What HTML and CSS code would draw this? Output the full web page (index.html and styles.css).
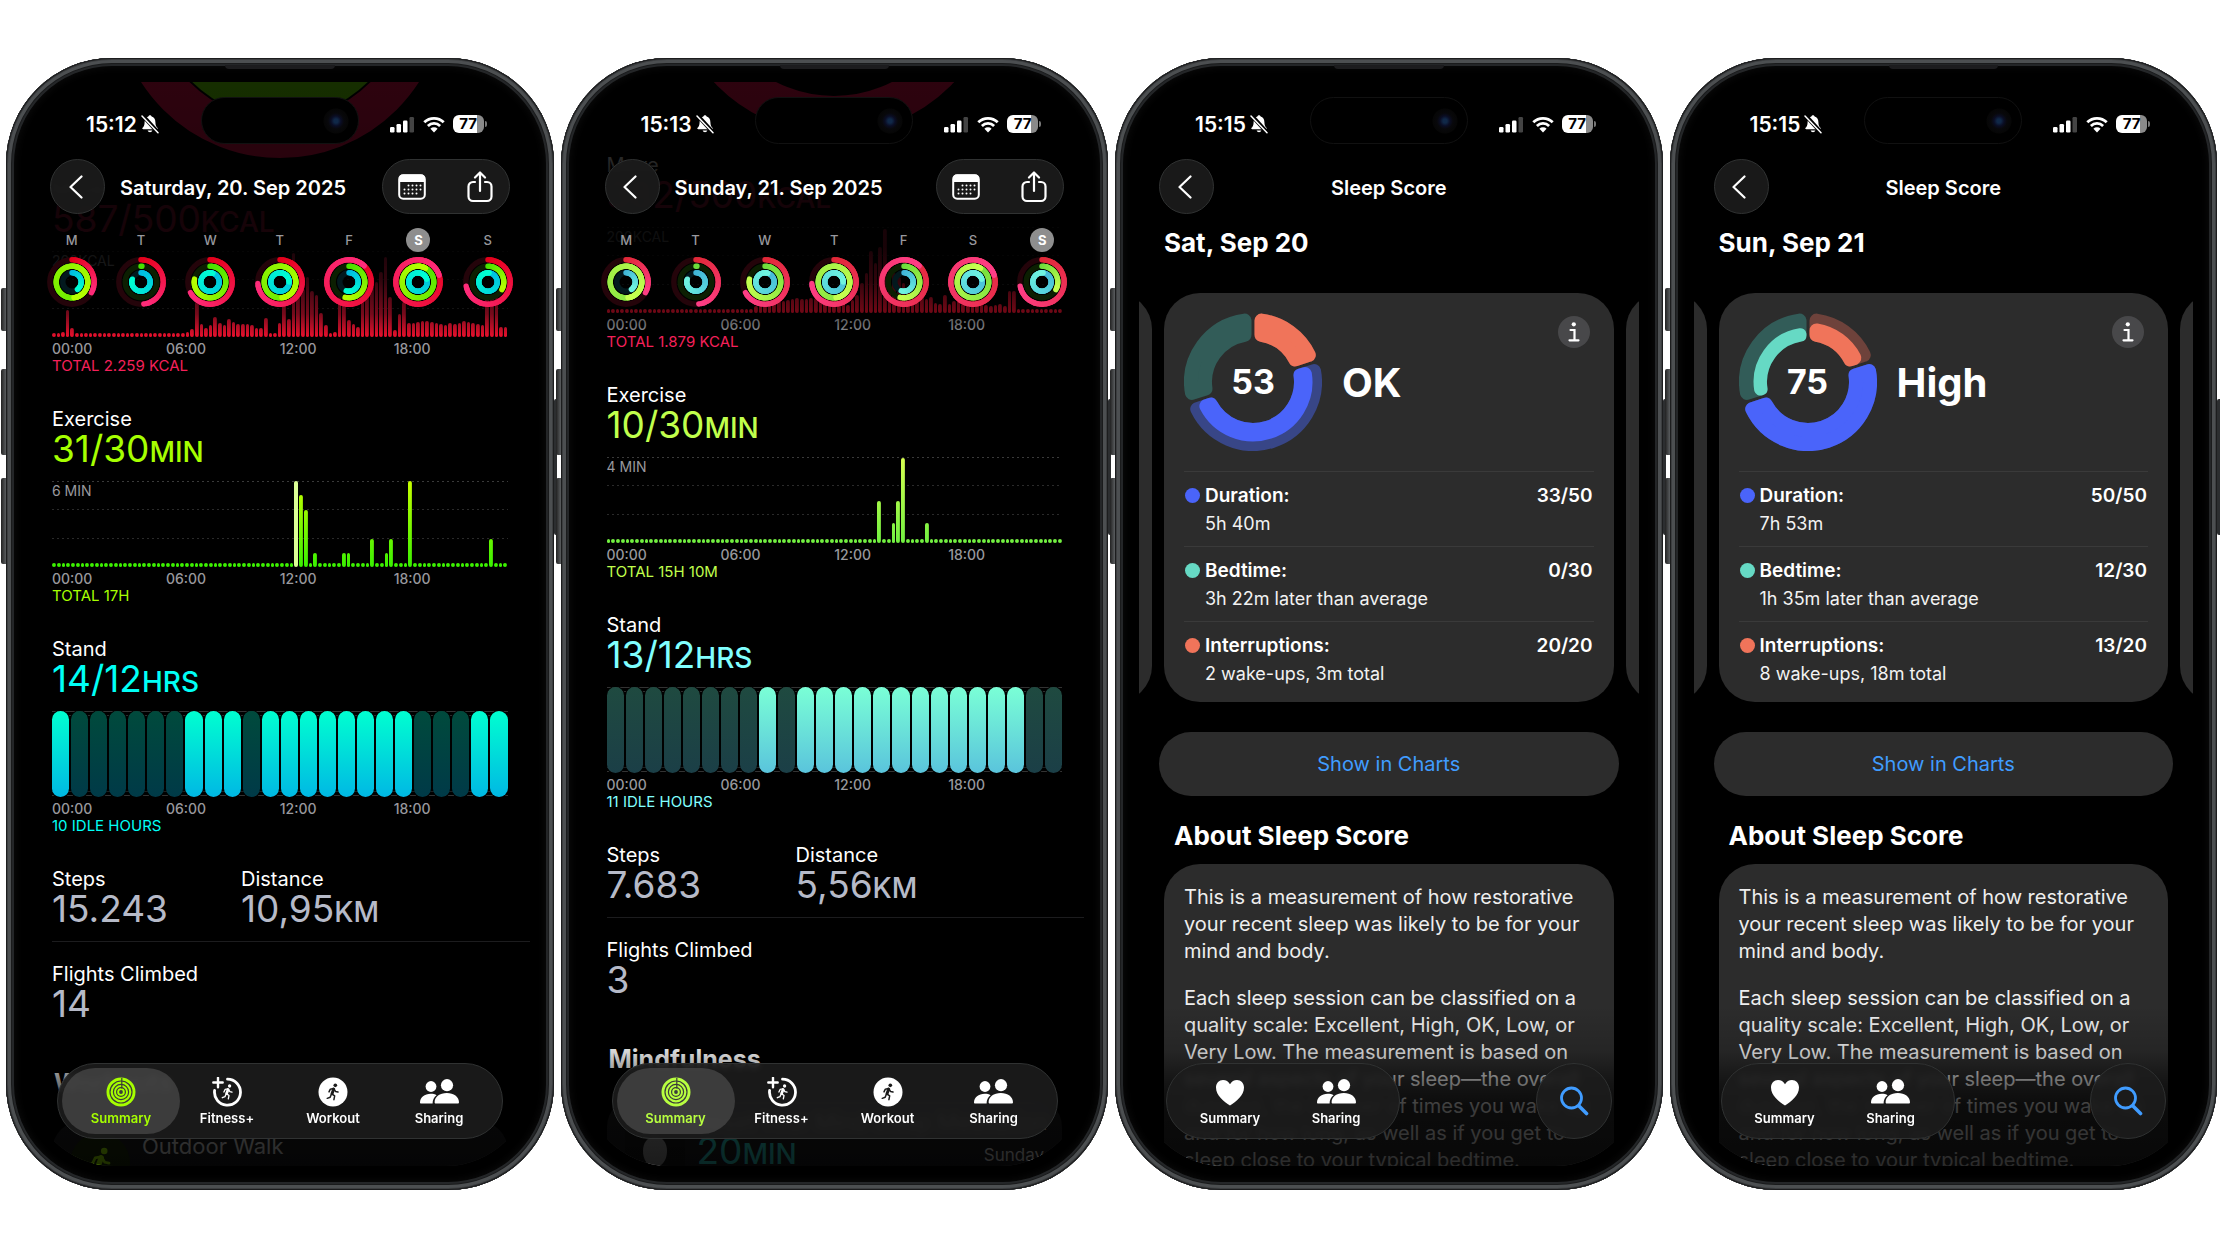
FILE: index.html
```html
<!DOCTYPE html>
<html lang="en">
<head>
  <meta charset="UTF-8" />
  <meta name="viewport" content="width=device-width,initial-scale=1" />
  <title>Activity and Sleep Score</title>
  <link rel="stylesheet" href="styles.css">
</head>
<body>

  <!-- ICONS -->
  <svg class="icon-defs" aria-hidden="true">
    <symbol id="i-bell" viewBox="0 0 18 20">
      <path d="M9 1.2c-.9 0-1.5.6-1.6 1.4C4.900 3.300 3.600 5.500 3.600 8.200c0 3.300-.9 4.400-2 5.500-.6.6-.3 1.500.6 1.500h13.600c.9 0 1.200-.9.6-1.500-1.100-1.100-2-2.200-2-5.500 0-2.700-1.300-4.900-3.800-5.600C10.500 1.800 9.900 1.200 9 1.200z" fill="#fff"/>
      <path d="M6.600 16.500a2.500 2.500 0 0 0 4.800 0z" fill="#fff"/>
      <path d="M1.500 1.300l15.500 17" stroke="#000" stroke-width="4"/>
      <path d="M1 2l16 16.800" stroke="#fff" stroke-width="1.500" stroke-linecap="round"/>
    </symbol>
    <symbol id="i-signal" viewBox="0 0 25 17">
      <rect x="0" y="11" width="4.500" height="5.500" rx="1.200" fill="#fff"/>
      <rect x="6.500" y="8" width="4.500" height="8.500" rx="1.200" fill="#fff"/>
      <rect x="13" y="4.500" width="4.500" height="12" rx="1.200" fill="#fff"/>
      <rect x="19.500" y="1" width="4.500" height="15.500" rx="1.200" fill="#444"/>
    </symbol>
    <symbol id="i-wifi" viewBox="0 0 22 17">
      <g fill="none" stroke="#fff" stroke-width="2.800">
        <path d="M1.300 6.300a13.800 13.800 0 0 1 19.400 0"/>
        <path d="M4.900 9.900a8.700 8.700 0 0 1 12.200 0"/>
      </g>
      <path d="M11 16.500l-3.600-3.700a5.100 5.100 0 0 1 7.200 0z" fill="#fff"/>
    </symbol>
    <symbol id="i-back" viewBox="0 0 14 24">
      <path d="M12.500 1.500L1.500 12l11 10.500" fill="none" stroke="#fff" stroke-width="2.200" stroke-linecap="round" stroke-linejoin="round"/>
    </symbol>
    <symbol id="i-calendar" viewBox="0 0 28 26">
      <rect x="1.200" y="1.200" width="25.600" height="23.600" rx="4" fill="none" stroke="#fff" stroke-width="2"/>
      <path d="M1 8V4.500a4 4 0 0 1 4-4h18a4 4 0 0 1 4 4V8z" fill="#fff"/>
      <g stroke="#fff" stroke-width="2" stroke-linecap="round" stroke-dasharray="0 4">
        <path d="M10.500 11.500h12.500"/><path d="M6.500 15.500h16.500"/><path d="M6.500 19.500h12.500"/>
      </g>
    </symbol>
    <symbol id="i-share" viewBox="0 0 26 32">
      <g fill="none" stroke="#fff" stroke-width="2.200" stroke-linecap="round" stroke-linejoin="round">
        <path d="M8 11H6a4.500 4.500 0 0 0-4.500 4.500v10A4.500 4.500 0 0 0 6 30h14a4.500 4.500 0 0 0 4.500-4.500v-10A4.500 4.500 0 0 0 20 11h-2"/>
        <path d="M13 20V1.800M8 6.500l5-5 5 5"/>
      </g>
    </symbol>
    <symbol id="i-rings" viewBox="0 0 30 30">
      <circle cx="15" cy="15" r="14.500" fill="currentColor"/>
      <g fill="none" stroke="#3a3a3a" stroke-width="1.200">
        <circle cx="15" cy="15" r="11"/><circle cx="15" cy="15" r="7.600"/><circle cx="15" cy="15" r="4.400"/>
        <path d="M15.800 1v10.500"/>
      </g>
      <circle cx="15" cy="15" r="1.900" fill="#3a3a3a"/>
    </symbol>
    <symbol id="i-runner" viewBox="0 0 24 24">
      <circle cx="14.800" cy="4" r="2.200" fill="currentColor"/>
      <g fill="none" stroke="currentColor" stroke-linecap="round" stroke-linejoin="round">
        <path d="M12.800 8.600l-2 5.400" stroke-width="3.600"/>
        <path d="M12.500 7.800l-3.700.8-1.600 3.300M13.300 8.500l1.900 3 2.800.6M11 14.500l3 2.200-.9 4.500M10.200 14.500L8.600 18.300l-3.500 1.300" stroke-width="1.800"/>
      </g>
    </symbol>
    <symbol id="i-fitness" viewBox="0 0 30 30">
      <path d="M15.500 2.200A13 13 0 1 1 2.600 13.500" fill="none" stroke="currentColor" stroke-width="2.800" stroke-linecap="round"/>
      <path d="M6 .8v9.400M1.300 5.500h9.400" stroke="currentColor" stroke-width="2.400" stroke-linecap="round"/>
      <use href="#i-runner" x="6.500" y="6" width="18" height="18"/>
    </symbol>
    <symbol id="i-workout" viewBox="0 0 30 30">
      <circle cx="15" cy="15" r="14.500" fill="currentColor"/>
      <g color="#1b1b1b"><use href="#i-runner" x="5" y="5" width="20" height="20"/></g>
    </symbol>
    <symbol id="i-people" viewBox="0 0 39 30">
      <circle cx="11" cy="9.500" r="5.400" fill="currentColor"/>
      <circle cx="27" cy="8.200" r="6.100" fill="currentColor"/>
      <path d="M0 25.500C0 20.500 4.500 16.800 10.800 16.800c2.200 0 4.200.5 5.800 1.400-2.600 1.900-4 4.500-4 8.300H1.200C.4 26.500 0 26.200 0 25.500z" fill="currentColor"/>
      <path d="M14.600 25.300c0-5.400 5.200-9.300 12.200-9.300s12.200 3.900 12.200 9.300c0 .8-.5 1.200-1.300 1.200H15.900c-.8 0-1.300-.4-1.300-1.200z" fill="currentColor"/>
    </symbol>
    <symbol id="i-heart" viewBox="0 0 30 30">
      <path d="M15 28.500C9 24.500 1 18.500 1 10.500 1 6 4.200 3 8 3c3 0 5.500 1.500 7 4.300C16.500 4.500 19 3 22 3c3.800 0 7 3 7 7.500 0 8-8 14-14 18z" fill="currentColor"/>
    </symbol>
    <symbol id="i-search" viewBox="0 0 30 30">
      <circle cx="12.500" cy="12" r="10" fill="none" stroke="currentColor" stroke-width="2.800"/>
      <path d="M20 20l7.500 7.500" stroke="currentColor" stroke-width="3.600" stroke-linecap="round"/>
    </symbol>
    <symbol id="i-info" viewBox="0 0 12 20">
      <circle cx="5.800" cy="2.300" r="2.100" fill="#fff"/>
      <path d="M2.500 8h4v10M1.500 18.300h9" fill="none" stroke="#fff" stroke-width="2.200" stroke-linecap="round"/>
    </symbol>
  </svg>

  <main class="phones">

    <!-- ACTIVITY, SATURDAY -->
    <section class="phone">
      <i class="side-button action"></i><i class="side-button up"></i><i class="side-button down"></i><i class="side-button power"></i>
      <div class="screen">
        <header class="top-bar faded">
          <div class="status">
            <span class="time">15:12</span>
            <svg class="bell"><use href="#i-bell"/></svg>
            <svg class="signal"><use href="#i-signal"/></svg>
            <svg class="wifi"><use href="#i-wifi"/></svg>
            <span class="battery">77</span>
          </div>
          <div class="nav">
            <button class="glass back" aria-label="Back"><svg><use href="#i-back"/></svg></button>
            <h1 class="nav-title">Saturday, 20. Sep 2025</h1>
            <div class="glass actions">
              <button aria-label="Calendar"><svg class="calendar"><use href="#i-calendar"/></svg></button>
              <button aria-label="Share"><svg class="share"><use href="#i-share"/></svg></button>
            </div>
          </div>
          <div class="week" data-selected="5" data-theme="vivid"></div>
        </header>
        <div class="island"></div>

        <div class="scroll day-one">
          <svg class="big-ring" viewBox="0 0 332 332" aria-hidden="true">
            <circle cx="166" cy="166" r="146" fill="none" stroke="#fa1150" stroke-width="38"/>
            <circle cx="166" cy="166" r="106" fill="none" stroke="#78ff00" stroke-width="38"/>
          </svg>
          <article class="metric move">
            <h2>Move</h2>
            <p class="value">587/500<small>KCAL</small></p>
            <div class="chart bars" data-chart="move1"><span class="scale">200KCAL</span></div>
            <div class="axis"><span>00:00</span><span>06:00</span><span>12:00</span><span>18:00</span></div>
            <p class="total">TOTAL 2.259 KCAL</p>
          </article>
          <article class="metric exercise">
            <h2>Exercise</h2>
            <p class="value">31/30<small>MIN</small></p>
            <div class="chart bars" data-chart="exercise1"><span class="scale">6 MIN</span></div>
            <div class="axis"><span>00:00</span><span>06:00</span><span>12:00</span><span>18:00</span></div>
            <p class="total">TOTAL 17H</p>
          </article>
          <article class="metric stand">
            <h2>Stand</h2>
            <p class="value">14/12<small>HRS</small></p>
            <div class="chart hours" data-chart="stand1"></div>
            <div class="axis"><span>00:00</span><span>06:00</span><span>12:00</span><span>18:00</span></div>
            <p class="total">10 IDLE HOURS</p>
          </article>
          <div class="totals">
            <div><h2>Steps</h2><p class="value">15.243</p></div>
            <div><h2>Distance</h2><p class="value">10,95<small>KM</small></p></div>
          </div>
          <div class="totals last">
            <div><h2>Flights Climbed</h2><p class="value">14</p></div>
          </div>
          <h2 class="group-title">Workouts</h2>
          <div class="session">
            <span class="session-icon"><svg><use href="#i-runner"/></svg></span>
            <div class="session-text"><p>Outdoor Walk</p></div>
          </div>
        </div>

        <nav class="tabs">
          <div class="glass tab-group">
            <a href="#" class="tab selected"><svg><use href="#i-rings"/></svg>Summary</a>
            <a href="#" class="tab"><svg><use href="#i-fitness"/></svg>Fitness+</a>
            <a href="#" class="tab"><svg><use href="#i-workout"/></svg>Workout</a>
            <a href="#" class="tab"><svg class="people"><use href="#i-people"/></svg>Sharing</a>
          </div>
        </nav>
      </div>
    </section>

    <!-- ACTIVITY, SUNDAY -->
    <section class="phone soft">
      <i class="side-button action"></i><i class="side-button up"></i><i class="side-button down"></i><i class="side-button power"></i>
      <div class="screen">
        <header class="top-bar faded">
          <div class="status">
            <span class="time">15:13</span>
            <svg class="bell"><use href="#i-bell"/></svg>
            <svg class="signal"><use href="#i-signal"/></svg>
            <svg class="wifi"><use href="#i-wifi"/></svg>
            <span class="battery">77</span>
          </div>
          <div class="nav">
            <button class="glass back" aria-label="Back"><svg><use href="#i-back"/></svg></button>
            <h1 class="nav-title">Sunday, 21. Sep 2025</h1>
            <div class="glass actions">
              <button aria-label="Calendar"><svg class="calendar"><use href="#i-calendar"/></svg></button>
              <button aria-label="Share"><svg class="share"><use href="#i-share"/></svg></button>
            </div>
          </div>
          <div class="week" data-selected="6" data-theme="soft"></div>
        </header>
        <div class="island"></div>

        <div class="scroll day-two">
          <svg class="big-ring" viewBox="0 0 332 332" aria-hidden="true">
            <circle cx="166" cy="166" r="146" fill="none" stroke="#fa1150" stroke-width="38"/>
          </svg>
          <article class="metric move">
            <h2>Move</h2>
            <p class="value">382/500<small>KCAL</small></p>
            <div class="chart bars" data-chart="move2"><span class="scale">200KCAL</span></div>
            <div class="axis"><span>00:00</span><span>06:00</span><span>12:00</span><span>18:00</span></div>
            <p class="total">TOTAL 1.879 KCAL</p>
          </article>
          <article class="metric exercise">
            <h2>Exercise</h2>
            <p class="value">10/30<small>MIN</small></p>
            <div class="chart bars" data-chart="exercise2"><span class="scale">4 MIN</span></div>
            <div class="axis"><span>00:00</span><span>06:00</span><span>12:00</span><span>18:00</span></div>
            <p class="total">TOTAL 15H 10M</p>
          </article>
          <article class="metric stand">
            <h2>Stand</h2>
            <p class="value">13/12<small>HRS</small></p>
            <div class="chart hours" data-chart="stand2"></div>
            <div class="axis"><span>00:00</span><span>06:00</span><span>12:00</span><span>18:00</span></div>
            <p class="total">11 IDLE HOURS</p>
          </article>
          <div class="totals">
            <div><h2>Steps</h2><p class="value">7.683</p></div>
            <div><h2>Distance</h2><p class="value">5,56<small>KM</small></p></div>
          </div>
          <div class="totals last">
            <div><h2>Flights Climbed</h2><p class="value">3</p></div>
          </div>
          <h2 class="group-title">Mindfulness</h2>
          <div class="session mindful">
            <svg class="portrait" viewBox="0 0 60 60" aria-hidden="true">
              <path d="M30 6c8 0 12 6 12 14 0 9-5 16-12 16s-12-7-12-16c0-8 4-14 12-14z" fill="#999"/>
              <path d="M10 60c1-14 8-20 20-22 12 2 19 8 20 22z" fill="#bbb"/>
            </svg>
            <div class="session-text">
              <p>Reset Your Mind Sleep Meditation</p>
              <p class="value">20<small>MIN</small></p>
            </div>
            <span class="session-day">Sunday</span>
          </div>
        </div>

        <nav class="tabs">
          <div class="glass tab-group">
            <a href="#" class="tab selected"><svg><use href="#i-rings"/></svg>Summary</a>
            <a href="#" class="tab"><svg><use href="#i-fitness"/></svg>Fitness+</a>
            <a href="#" class="tab"><svg><use href="#i-workout"/></svg>Workout</a>
            <a href="#" class="tab"><svg class="people"><use href="#i-people"/></svg>Sharing</a>
          </div>
        </nav>
      </div>
    </section>

    <!-- SLEEP, SATURDAY -->
    <section class="phone">
      <i class="side-button action"></i><i class="side-button up"></i><i class="side-button down"></i><i class="side-button power"></i>
      <div class="screen">
        <header class="top-bar">
          <div class="status">
            <span class="time">15:15</span>
            <svg class="bell"><use href="#i-bell"/></svg>
            <svg class="signal"><use href="#i-signal"/></svg>
            <svg class="wifi"><use href="#i-wifi"/></svg>
            <span class="battery">77</span>
          </div>
          <div class="nav centered">
            <button class="glass back" aria-label="Back"><svg><use href="#i-back"/></svg></button>
            <h1 class="nav-title">Sleep Score</h1>
          </div>
        </header>
        <div class="island"></div>

        <h2 class="date">Sat, Sep 20</h2>
        <div class="carousel">
          <div class="card"></div>
          <div class="card">
            <div class="score">
              <div class="donut" data-parts="1,0.66,0"><b>53</b></div>
              <strong>OK</strong>
              <button class="info" aria-label="About this score"><svg><use href="#i-info"/></svg></button>
            </div>
            <dl class="parts">
              <div class="duration"><dt>Duration:</dt><dd class="points">33/50</dd><dd class="detail">5h 40m</dd></div>
              <div class="bedtime"><dt>Bedtime:</dt><dd class="points">0/30</dd><dd class="detail">3h 22m later than average</dd></div>
              <div class="interruptions"><dt>Interruptions:</dt><dd class="points">20/20</dd><dd class="detail">2 wake-ups, 3m total</dd></div>
            </dl>
          </div>
          <div class="card"></div>
        </div>
        <button class="charts-button">Show in Charts</button>
        <h2 class="about-title">About Sleep Score</h2>
        <div class="card about">
          <p>This is a measurement of how restorative your recent sleep was likely to be for your mind and body.</p>
          <p>Each sleep session can be classified on a quality scale: Excellent, High, OK, Low, or Very Low. The measurement is based on several aspects of your sleep—the overall duration, the number of times you wake up and for how long, as well as if you get to sleep close to your typical bedtime.</p>
        </div>

        <nav class="tabs">
          <div class="glass tab-group">
            <a href="#" class="tab"><svg><use href="#i-heart"/></svg>Summary</a>
            <a href="#" class="tab"><svg class="people"><use href="#i-people"/></svg>Sharing</a>
          </div>
          <button class="glass search" aria-label="Search"><svg><use href="#i-search"/></svg></button>
        </nav>
      </div>
    </section>

    <!-- SLEEP, SUNDAY -->
    <section class="phone">
      <i class="side-button action"></i><i class="side-button up"></i><i class="side-button down"></i><i class="side-button power"></i>
      <div class="screen">
        <header class="top-bar">
          <div class="status">
            <span class="time">15:15</span>
            <svg class="bell"><use href="#i-bell"/></svg>
            <svg class="signal"><use href="#i-signal"/></svg>
            <svg class="wifi"><use href="#i-wifi"/></svg>
            <span class="battery">77</span>
          </div>
          <div class="nav centered">
            <button class="glass back" aria-label="Back"><svg><use href="#i-back"/></svg></button>
            <h1 class="nav-title">Sleep Score</h1>
          </div>
        </header>
        <div class="island"></div>

        <h2 class="date">Sun, Sep 21</h2>
        <div class="carousel">
          <div class="card"></div>
          <div class="card">
            <div class="score">
              <div class="donut" data-parts="0.65,1,0.48"><b>75</b></div>
              <strong>High</strong>
              <button class="info" aria-label="About this score"><svg><use href="#i-info"/></svg></button>
            </div>
            <dl class="parts">
              <div class="duration"><dt>Duration:</dt><dd class="points">50/50</dd><dd class="detail">7h 53m</dd></div>
              <div class="bedtime"><dt>Bedtime:</dt><dd class="points">12/30</dd><dd class="detail">1h 35m later than average</dd></div>
              <div class="interruptions"><dt>Interruptions:</dt><dd class="points">13/20</dd><dd class="detail">8 wake-ups, 18m total</dd></div>
            </dl>
          </div>
          <div class="card"></div>
        </div>
        <button class="charts-button">Show in Charts</button>
        <h2 class="about-title">About Sleep Score</h2>
        <div class="card about">
          <p>This is a measurement of how restorative your recent sleep was likely to be for your mind and body.</p>
          <p>Each sleep session can be classified on a quality scale: Excellent, High, OK, Low, or Very Low. The measurement is based on several aspects of your sleep—the overall duration, the number of times you wake up and for how long, as well as if you get to sleep close to your typical bedtime.</p>
        </div>

        <nav class="tabs">
          <div class="glass tab-group">
            <a href="#" class="tab"><svg><use href="#i-heart"/></svg>Summary</a>
            <a href="#" class="tab"><svg class="people"><use href="#i-people"/></svg>Sharing</a>
          </div>
          <button class="glass search" aria-label="Search"><svg><use href="#i-search"/></svg></button>
        </nav>
      </div>
    </section>

  </main>

  <script src="script.js"></script>
</body>
</html>
```
FILE: styles.css
```css
* { box-sizing: border-box; }
body { margin: 0; background: #fff; color: #fff; font-family: Inter, "Liberation Sans", sans-serif; font-size: 20px; }
h1, h2, p, dl, dd { margin: 0; }
button { border: 0; padding: 0; background: none; color: inherit; font: inherit; }
a { color: inherit; text-decoration: none; }
svg { display: block; }
.icon-defs { position: absolute; width: 0; height: 0; }

.phones { display: grid; grid-template-columns: repeat(4, 1fr); gap: 7px; align-content: center; min-height: 100vh; padding: 0 3px 0 6px; }

/* device frame */
.phone {
  position: relative; display: flex; aspect-ratio: 547 / 1130; padding: 24px; border-radius: 106px; background: #000;
  box-shadow: inset 0 0 0 1px #1c1d1e, inset 0 0 0 2px #3c3e40, inset 0 0 0 5px #4c4f51, inset 0 0 0 6px #1a1b1c, inset 0 0 0 8px #242628, inset 0 0 8px 9px #0c0c0c;
}
.phone::before { content: ""; position: absolute; top: 7px; left: 40%; width: 20%; height: 4px; border-radius: 0 0 4px 4px; background: #1c1c1e; }
.side-button { position: absolute; left: -5px; width: 5px; border-radius: 2px 0 0 2px; background: linear-gradient(90deg, #222, #5a5d5f); }
.action { top: 230px; height: 43px; }
.up { top: 311px; height: 86px; }
.down { top: 420px; height: 86px; }
.power { top: 341px; right: -3px; left: auto; width: 3px; height: 136px; background: #2c2e30; }

.screen { position: relative; display: flex; flex-direction: column; flex: 1; min-width: 0; overflow: hidden; border-radius: 84px; background: #000; }
.screen::after {
  content: ""; position: absolute; inset: auto 0 0; height: 160px;
  background: linear-gradient(transparent, rgba(0,0,0,.15) 28%, rgba(0,0,0,.5) 46%, rgba(0,0,0,.74) 62%, rgba(0,0,0,.82));
}

/* status and navigation */
.top-bar { position: relative; z-index: 1; flex: none; padding-top: 27px; }
.top-bar.faded { padding-bottom: 30px; background: linear-gradient(rgba(0,0,0,.82), rgba(0,0,0,.84) 30%, rgba(0,0,0,.92) 40%, rgba(0,0,0,.9) 65%, rgba(0,0,0,.8) 78%, rgba(0,0,0,.5) 91%, transparent); }
.status { display: flex; align-items: center; height: 30px; padding: 0 46px 0 56px; }
.time { font-size: 21px; font-weight: 600; }
.bell { width: 18px; height: 20px; margin: 0 auto 0 4px; }
.signal { width: 25px; height: 17px; }
.wifi { width: 22px; height: 17px; margin: 0 8px; }
.battery { position: relative; width: 31px; height: 18px; border-radius: 6px; background: linear-gradient(90deg, #fff 77%, #8a8a8a 77%); color: #000; font-size: 15px; font-weight: 700; line-height: 18px; text-align: center; }
.battery::after { content: ""; position: absolute; top: 6px; right: -3px; width: 2px; height: 6px; border-radius: 0 2px 2px 0; background: #777; }
.island { position: absolute; z-index: 2; top: 15px; left: 50%; width: 158px; height: 47px; margin-left: -79px; border: 1px solid #111; border-radius: 24px; background: radial-gradient(circle at 134px 23px, #102848 2px, #0a0d24 5px, #08080b 8px, #060606 12px, #000 13px); }

.glass { border: 1px solid #303232; background: rgba(28,29,29,.88); backdrop-filter: blur(3px); }
.nav { display: flex; align-items: center; height: 55px; margin-top: 20px; padding: 0 20px; gap: 15px; }
.nav.centered { display: grid; grid-template-columns: 1fr auto 1fr; gap: 0; }
.nav-title { padding-top: 2px; font-size: 20px; font-weight: 600; white-space: nowrap; }
.back { display: grid; place-items: center; width: 55px; height: 55px; border-radius: 50%; }
.back svg { width: 14px; height: 24px; margin-right: 4px; }
.actions { display: flex; align-items: center; justify-content: space-between; width: 128px; height: 55px; margin-left: auto; padding: 0 16px 0 15px; border-radius: 28px; }
.calendar { width: 28px; height: 26px; }
.share { width: 26px; height: 32px; }

.week { display: grid; grid-template-columns: repeat(7, 1fr); justify-items: center; margin-top: 14px; padding: 0 7px; }
.day { display: flex; flex-direction: column; align-items: center; gap: 5px; color: #98989d; font-size: 13px; font-weight: 500; }
.day span { width: 24px; border-radius: 50%; line-height: 24px; text-align: center; }
.day.selected span { background: #8e8e8e; color: #fff; font-weight: 700; }
.day svg { width: 50px; height: 50px; }

/* activity metrics */
.scroll { position: relative; flex: none; padding-left: 22px; }
.day-one { margin-top: -162px; }
.day-two { margin-top: -186px; }
.big-ring { position: absolute; top: -348px; left: 50%; width: 332px; margin-left: -166px; }
.scroll h2 { font-size: 20px; font-weight: 400; line-height: 28px; }
.value { font-size: 37px; font-weight: 400; line-height: 32px; white-space: nowrap; }
.value small { font-size: 28px; font-weight: 500; line-height: 1px; }
.metric { margin: 0 22px 30px 0; }
.metric .value { color: var(--color); }
.chart { position: relative; display: flex; align-items: flex-end; height: 86px; margin-top: 16px; }
.bars {
  gap: 1px;
  background:
    repeating-linear-gradient(90deg, #3a3a3a 0 2px, transparent 2px 5px) 0 0 / 100% 1px,
    repeating-linear-gradient(90deg, #2a2a2a 0 2px, transparent 2px 5px) 0 28px / 100% 1px,
    repeating-linear-gradient(90deg, #2a2a2a 0 2px, transparent 2px 5px) 0 57px / 100% 1px;
  background-repeat: no-repeat;
}
.bars i { flex: 1; min-height: 4px; border-radius: 2px; background: var(--bar) bottom / 100% 86px no-repeat; }
.bars i.peak { background: #dcff96; }
.scale { position: absolute; top: 2px; left: 0; color: #98989d; font-size: 14px; line-height: 16px; }
.hours { gap: 2px; background: repeating-linear-gradient(#333 0 1px, transparent 1px 4px); }
.hours i { position: relative; flex: 1; height: 86px; border-radius: 9px; background: linear-gradient(var(--off)); box-shadow: 0 0 0 1px #000; }
.hours i.on { background: linear-gradient(var(--on)); }
.axis { display: grid; grid-template-columns: repeat(4, 1fr); margin-top: 4px; color: #98989d; font-size: 14px; font-weight: 500; line-height: 16px; }
.total { color: var(--color); font-size: 15px; line-height: 18px; }
.move { --color: #f5205a; --bar: linear-gradient(#ff2050, #e8102c); }
.exercise { --color: #a6ff00; --bar: linear-gradient(#c8ff00, #38f000); }
.stand { --color: #00fff6; --on: #00ffd0, #00b8e4; --off: #004a3c, #003a48; }
.soft .exercise { --color: #c0ff4c; --bar: linear-gradient(#d8ff50, #70f040); }
.soft .stand { --color: #80ffff; --on: #7affd6, #5ac4dc; --off: #1f4a40, #1b3f47; }

.totals { display: grid; grid-template-columns: 189px 1fr; padding-bottom: 16px; border-bottom: 1px solid #1c1c1e; }
.totals.last { padding: 18px 0 0; border: 0; }
.totals .value { color: #b6bac8; }
.scroll .group-title { margin: 47px 0 22px; padding-left: 2px; font-size: 25px; font-weight: 700; line-height: 32px; }
.session { display: flex; gap: 12px; height: 90px; margin-right: 22px; padding: 12px 18px; border-radius: 30px; background: #1c1c1e; color: #ddd; }
.session-icon { width: 60px; height: 60px; padding: 12px; border-radius: 50%; background: #1c2c08; color: #a6ff00; }
.session-icon svg { width: 36px; height: 36px; }
.session-text { font-size: 22px; line-height: 26px; white-space: nowrap; }
.session-text .value { color: #2fd4cc; }
.portrait { width: 60px; height: 60px; margin-top: 22px; background: #161616; }
.session-day { margin: 36px 0 0 auto; font-size: 17px; }
.mindful .session-text { width: 250px; }

/* sleep score */
.date { flex: none; margin: 13px 25px 34px; font-size: 26px; font-weight: 700; line-height: 32px; }
.carousel { display: flex; flex: none; justify-content: center; gap: 12px; }
.card { flex: none; width: calc(100% - 50px); padding: 20px 20px 6px; border-radius: 36px; background: #2c2c2c; }
.score { display: flex; align-items: center; margin-bottom: 20px; }
.donut { display: grid; width: 138px; height: 138px; place-items: center; }
.donut > * { grid-area: 1 / 1; }
.donut svg { width: 138px; height: 138px; }
.donut b { font-size: 34px; font-weight: 700; line-height: 40px; }
.score strong { margin-left: 20px; font-size: 40px; font-weight: 700; }
.info { display: grid; place-items: center; align-self: flex-start; width: 32px; height: 32px; margin: 3px 4px 0 auto; border-radius: 50%; background: #48484a; }
.info svg { width: 12px; height: 20px; }
.parts > div { display: grid; grid-template-columns: 1fr auto; padding: 10px 1px 8px 21px; border-top: 1px solid #3a3a3a; font-size: 19px; line-height: 28px; }
.parts dt { position: relative; font-weight: 600; }
.parts dt::before { content: ""; position: absolute; top: 6px; left: -20px; width: 15px; height: 15px; border-radius: 50%; background: var(--dot); }
.points { font-weight: 600; }
.detail { grid-column: 1 / -1; color: #f2f2f2; font-size: 18px; }
.duration { --dot: #4a64fa; }
.bedtime { --dot: #66d9c4; }
.interruptions { --dot: #f0745a; }
.charts-button { flex: none; height: 64px; margin: 30px 20px 24px; border-radius: 32px; background: #2c2c2c; color: #409cff; }
.about-title { flex: none; margin: 0 35px 12px; font-size: 26px; font-weight: 700; line-height: 32px; white-space: nowrap; }
.about { align-self: center; padding: 20px 18px 20px 20px; font-size: 20px; line-height: 27px; color: #eee; }
.about p + p { margin-top: 20px; }

/* tab bar */
.tabs { position: absolute; z-index: 2; right: 27px; bottom: 27px; left: 27px; display: flex; justify-content: space-between; }
.tab-group { display: flex; height: 76px; padding: 0 10px; border-radius: 38px; }
.tab { position: relative; display: flex; flex-direction: column; align-items: center; width: 106px; padding-top: 13px; font-size: 13px; font-weight: 600; line-height: 22px; }
.tab svg { position: relative; width: 30px; height: 30px; }
.tab .people { width: 39px; }
.tab.selected { z-index: 0; color: #a6ff00; }
.soft .tab.selected { color: #b8ff40; }
.tab.selected::before { content: ""; position: absolute; z-index: -1; inset: 4px -6px; border-radius: 34px; background: rgba(84,84,84,.6); }
.search { display: grid; place-items: center; width: 76px; height: 76px; border-radius: 50%; color: #409cff; }
.search svg { width: 30px; height: 30px; }
```
FILE: script.js
```js
// 96 quarter-hour bars a day, height in px
const idle = n => Array(n).fill(3);

const charts = {
  move1: [3, 3, 5, 27, 9, ...idle(24), 5, 8, 35, 13, 9, 12, 20, 14, 12, 18, 15, 13, 13, 13, 12, 9, 9, 19, 3, 3, 14, 40, 18, 84, 50, 48, 60, 46, 42, 24, 12, 3, 5, 40, 40, 17, 13, 10, 45, 50, 62, 55, 65, 80, 40, 7, 23, 35, 14, 14, 15, 16, 16, 15, 14, 13, 12, 14, 13, 14, 16, 15, 14, 13, 12, 40, 40, 40, 10, 10],
  move2: [...idle(32), 7, 9, 8, 11, 12, 13, 12, 13, 14, 15, 14, 14, 15, 15, 16, 15, 14, 15, 13, 10, 8, 13, 18, 30, 40, 62, 50, 66, 84, 50, 40, 36, 30, 24, 20, 18, 17, 14, 16, 10, 9, 18, 9, 12, 14, 10, 13, 12, 14, 10, 8, 7, 8, 9, 7, 22, 22, 4, 4, ...idle(8)],
  exercise1: [...idle(51), 86, 72, 57, 3, 14, ...idle(5), 14, 14, ...idle(4), 28, 3, 3, 14, 28, ...idle(3), 86, ...idle(16), 28, 3, 3, 3],
  exercise2: [...idle(57), 42, 3, 3, 20, 42, 85, ...idle(4), 20, ...idle(28)],
  stand1: [0, 7, 8, 9, 11, 12, 13, 14, 15, 16, 17, 18, 22, 23],
  stand2: [8, 10, 11, 12, 13, 14, 15, 16, 17, 18, 19, 20, 21]
};

document.querySelectorAll('[data-chart]').forEach(el => {
  const name = el.dataset.chart;
  const data = charts[name];
  let html = '';
  if (el.classList.contains('hours')) {
    for (let h = 0; h < 24; h++) html += `<i class="${data.includes(h) ? 'on' : ''}"></i>`;
  } else {
    data.forEach((h, i) => {
      const peak = name === 'exercise1' && i === 51 ? 'peak' : '';
      html += `<i class="${peak}" style="height:${h}px"></i>`;
    });
  }
  el.insertAdjacentHTML('beforeend', html);
});

// point on a circle, angle in turns clockwise from the top
function point(c, r, turn) {
  const a = turn * 2 * Math.PI;
  return (c + r * Math.sin(a)).toFixed(2) + ' ' + (c - r * Math.cos(a)).toFixed(2);
}

function mix(a, b, t) {
  return 'rgb(' + a.map((v, i) => Math.round(v + (b[i] - v) * t)).join(',') + ')';
}

// move, exercise and stand progress for each day
const week = [
  ['M', 0.33, 1.48, 0.4], ['T', 0.48, 0.01, 0.8], ['W', 0.67, 0.78, 1.05], ['T', 0.74, 1.48, 1.25],
  ['F', 1.12, 0.54, 0.55], ['S', 1.2, 1.08, 1.2], ['S', 0.72, 0.33, 1.02]
];
const themes = {
  vivid: [[[228, 0, 26], [255, 45, 125]], [[70, 225, 0], [185, 255, 0]], [[0, 185, 225], [0, 255, 210]]],
  soft: [[[224, 40, 55], [255, 62, 135]], [[110, 220, 60], [200, 255, 80]], [[64, 180, 216], [112, 245, 224]]]
};
const tracks = ['#24040a', '#0c1f02', '#03191e'];
const radii = [22.2, 15.8, 9.2];

function ring(progress, colors, r, track) {
  const steps = Math.ceil(progress * 48);
  let svg = `<circle cx="25" cy="25" r="${r}" fill="none" stroke="${track}" stroke-width="5.400"/>`;
  for (let i = 0; i < steps; i++) {
    const from = progress * i / steps;
    const to = progress * (i + 1) / steps;
    svg += `<path d="M${point(25, r, from)}A${r} ${r} 0 0 1 ${point(25, r, to)}" fill="none" stroke="${mix(...colors, i / steps)}" stroke-width="5.400" stroke-linecap="round"/>`;
  }
  return svg;
}

document.querySelectorAll('.week').forEach(el => {
  const theme = themes[el.dataset.theme];
  el.innerHTML = week.map(([letter, ...values], i) => {
    const rings = values.map((v, k) => ring(v, theme[k], radii[k], tracks[k])).join('');
    const selected = i === Number(el.dataset.selected) ? ' selected' : '';
    return `<button class="day${selected}"><span>${letter}</span><svg viewBox="0 0 50 50">${rings}</svg></button>`;
  }).join('');
});

// donut segment with rounded corners: the path is inset and a round-joined stroke fills it out
function segment(start, end, outer, color) {
  const inner = 41;
  const c = Math.min(7, (outer - inner) / 2 - 0.5);
  const r0 = inner + c;
  const r1 = outer - c;
  const gap = r => Math.asin((c + 1.5) / r) / (2 * Math.PI);
  const large = end - start - 2 * gap(r1) > 0.5 ? 1 : 0;
  const d = `M${point(69, r1, start + gap(r1))}A${r1} ${r1} 0 ${large} 1 ${point(69, r1, end - gap(r1))}` +
    `L${point(69, r0, end - gap(r0))}A${r0} ${r0} 0 ${large} 0 ${point(69, r0, start + gap(r0))}Z`;
  return `<path d="${d}" fill="${color}" stroke="${color}" stroke-width="${2 * c}" stroke-linejoin="round"/>`;
}

const parts = [
  [0, 0.2, '#f0745a', '#6e423b'],
  [0.2, 0.7, '#4a64fa', '#384687'],
  [0.7, 1, '#66d9c4', '#325c58']
];

document.querySelectorAll('.donut').forEach(el => {
  const values = el.dataset.parts.split(',').map(Number);
  const svg = parts.map(([start, end, color, track], i) => {
    const value = values[i] ? segment(start, end, 41 + 28 * values[i], color) : '';
    return segment(start, end, 69, track) + value;
  }).join('');
  el.insertAdjacentHTML('afterbegin', `<svg viewBox="0 0 138 138" aria-hidden="true">${svg}</svg>`);
});
```
